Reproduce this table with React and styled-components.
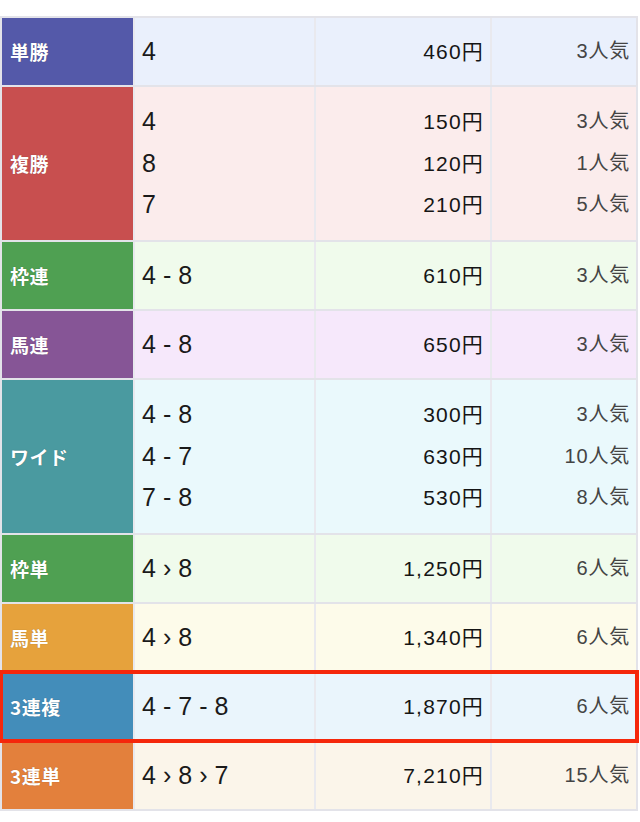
import React from "react";
import styled, { createGlobalStyle } from "styled-components";

const GlobalStyle = createGlobalStyle`
  html, body {
    margin: 0;
    padding: 0;
    background: #fff;
  }
  body {
    font-family: "Noto Sans CJK JP", "Noto Sans", sans-serif;
  }
`;

const Page = styled.div`
  width: 640px;
  padding-top: 16px;
`;

const Table = styled.div`
  width: 638px;
  box-sizing: border-box;
  padding: 2px;
  background: #e3e3e9;
  display: flex;
  flex-direction: column;
  gap: 2px;
`;

const Row = styled.div`
  display: grid;
  grid-template-columns: 131px 179px 174px 1fr;
  column-gap: 2px;
  height: ${props => (props.lines > 1 ? 153 : 67)}px;
  background: #e9e9ee;
  ${props =>
    props.highlight &&
    `
    outline: 4px solid #f5270b;
    outline-offset: -1px;
    position: relative;
    z-index: 1;
  `}
`;

const Label = styled.div`
  background: ${props => props.color};
  color: #fff;
  font-weight: 700;
  font-size: 19px;
  display: flex;
  align-items: center;
  padding-left: 8px;
  letter-spacing: 0.5px;
  text-shadow: 0 0 1px rgba(0, 0, 0, 0.35);
`;

const Cell = styled.div`
  background: ${props => props.bg};
  display: flex;
  flex-direction: column;
  justify-content: center;
  align-items: ${props => (props.right ? "flex-end" : "flex-start")};
  padding: ${props => (props.right ? "0 7px 0 0" : "0 0 0 7px")};
  font-family: "Liberation Sans", "Noto Sans CJK JP", sans-serif;
`;

const Horse = styled.div`
  font-size: 25px;
  line-height: 41.5px;
  color: #1a1a1a;
  letter-spacing: 7px;
  white-space: pre;
`;

const Payout = styled.div`
  font-size: 21px;
  line-height: 41.5px;
  color: #151515;
  letter-spacing: 1.2px;
  margin-right: -1px;
`;

const Rank = styled.div`
  font-size: 20px;
  line-height: 41.5px;
  color: #444;
  letter-spacing: 0.8px;
  margin-right: -1px;
`;

const rows = [
  { label: "単勝", color: "#5459a9", bg: "#eaf0fc", items: [["4", "460円", "3人気"]] },
  {
    label: "複勝",
    color: "#c84f4f",
    bg: "#fbecec",
    items: [
      ["4", "150円", "3人気"],
      ["8", "120円", "1人気"],
      ["7", "210円", "5人気"]
    ]
  },
  { label: "枠連", color: "#4fa052", bg: "#f0fbec", items: [["4-8", "610円", "3人気"]] },
  { label: "馬連", color: "#865596", bg: "#f6e8fb", items: [["4-8", "650円", "3人気"]] },
  {
    label: "ワイド",
    color: "#4a9aa0",
    bg: "#eaf9fc",
    items: [
      ["4-8", "300円", "3人気"],
      ["4-7", "630円", "10人気"],
      ["7-8", "530円", "8人気"]
    ]
  },
  { label: "枠単", color: "#4fa052", bg: "#f0fbec", items: [["4›8", "1,250円", "6人気"]] },
  { label: "馬単", color: "#e6a23c", bg: "#fdfbea", items: [["4›8", "1,340円", "6人気"]] },
  {
    label: "3連複",
    color: "#438dba",
    bg: "#eaf5fc",
    highlight: true,
    items: [["4-7-8", "1,870円", "6人気"]]
  },
  { label: "3連単", color: "#e3803c", bg: "#fbf5ea", items: [["4›8›7", "7,210円", "15人気"]] }
];

export default function App() {
  return (
    <Page>
      <GlobalStyle />
      <Table>
        {rows.map(row => (
          <Row key={row.label} lines={row.items.length} highlight={row.highlight}>
            <Label color={row.color}>{row.label}</Label>
            <Cell bg={row.bg}>
              {row.items.map((it, i) => (
                <Horse key={i}>{it[0]}</Horse>
              ))}
            </Cell>
            <Cell bg={row.bg} right>
              {row.items.map((it, i) => (
                <Payout key={i}>{it[1]}</Payout>
              ))}
            </Cell>
            <Cell bg={row.bg} right>
              {row.items.map((it, i) => (
                <Rank key={i}>{it[2]}</Rank>
              ))}
            </Cell>
          </Row>
        ))}
      </Table>
    </Page>
  );
}
